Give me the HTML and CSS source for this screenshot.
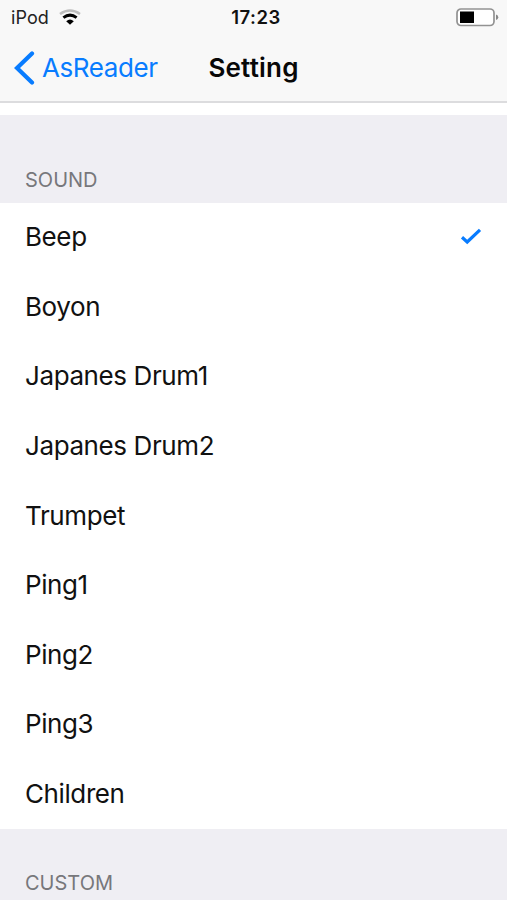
FILE: index.html
```html
<!DOCTYPE html>
<html lang="en">
<head>
<meta charset="utf-8">
<title>Setting</title>
<link rel="stylesheet" href="styles.css">
</head>
<body>
<header class="top">
  <div class="status">
    <div class="carrier"><span>iPod</span>
      <svg class="wifi" width="22" height="16" viewBox="0 0 22 16" fill="none">
        <path d="M1 5Q11-2 21 5" stroke="#bdbdbd" stroke-width="2.6"/>
        <path d="M4.4 8.6Q11 3.6 17.6 8.6" stroke="#000" stroke-width="3"/>
        <path d="M7.2 12.2Q11 9 14.8 12.2L11 15.8Z" fill="#000"/>
      </svg>
    </div>
    <span class="time">17:23</span>
    <svg class="battery" width="43" height="19" viewBox="0 0 43 19">
      <rect x="1" y="1" width="37" height="16.5" rx="4" fill="#fff" stroke="#929292" stroke-width="1.7"/>
      <rect x="4" y="3.5" width="14" height="11.5" fill="#000"/>
      <path d="M40 6.5Q42.3 7 42.3 9.2T40 12Z" fill="#888"/>
    </svg>
  </div>
  <nav class="nav">
    <a class="back"><svg width="21" height="34" viewBox="0 0 21 34" fill="none"><path d="M18 2.5 3 17l15 14.5" stroke="#087cff" stroke-width="4.2" stroke-linecap="round"/></svg><span>AsReader</span></a>
    <h1 class="title">Setting</h1>
  </nav>
</header>
<main>
  <h2 class="section">SOUND</h2>
  <ul class="list">
    <li><span>Beep</span><svg width="22" height="17" viewBox="0 0 22 17" fill="none"><path d="M2 9.3 7.2 14 20 1.8" stroke="#087cff" stroke-width="3.2"/></svg></li>
    <li>Boyon</li>
    <li>Japanes Drum1</li>
    <li>Japanes Drum2</li>
    <li>Trumpet</li>
    <li>Ping1</li>
    <li>Ping2</li>
    <li>Ping3</li>
    <li>Children</li>
  </ul>
  <h2 class="section custom">CUSTOM</h2>
</main>
</body>
</html>
```
FILE: styles.css
```css
* { box-sizing: border-box; }
body { margin: 0; height: 900px; overflow: hidden; background: #fff; color: #111; font-family: Inter, "Liberation Sans", sans-serif; }
.top { height: 103px; background: #f8f8f8; border-bottom: 2px solid #dcdcde; }
.status { height: 34px; padding: 0 8px 0 11px; display: grid; grid-template-columns: 1fr auto 1fr; align-items: center; font-size: 18px; }
.carrier { display: flex; align-items: center; gap: 10px; color: #222; letter-spacing: 0.1px; }
.time { padding-left: 2px; font-weight: 600; font-size: 18.5px; letter-spacing: 0.5px; }
.battery { justify-self: end; }
.nav { height: 67px; padding: 0 14px; display: grid; grid-template-columns: 1fr auto 1fr; align-items: center; }
.back { display: flex; align-items: center; gap: 7px; color: #087cff; font-size: 26px; letter-spacing: -0.4px; }
.title { margin: 0; font-size: 26px; font-weight: 600; letter-spacing: 0.2px; color: #080808; }
.section { margin: 12px 0 0; height: 88px; padding: 51px 25px 0; background: #efeef3; color: #77777b; font-size: 20px; line-height: 28px; font-weight: 400; letter-spacing: 0; }
.list { margin: 0; padding: 0; list-style: none; }
.list li { height: 69.6px; padding: 0 25px 2px; display: flex; align-items: center; justify-content: space-between; font-size: 26px; letter-spacing: -0.4px; }
.custom { margin: 0; padding-top: 40px; }
```
